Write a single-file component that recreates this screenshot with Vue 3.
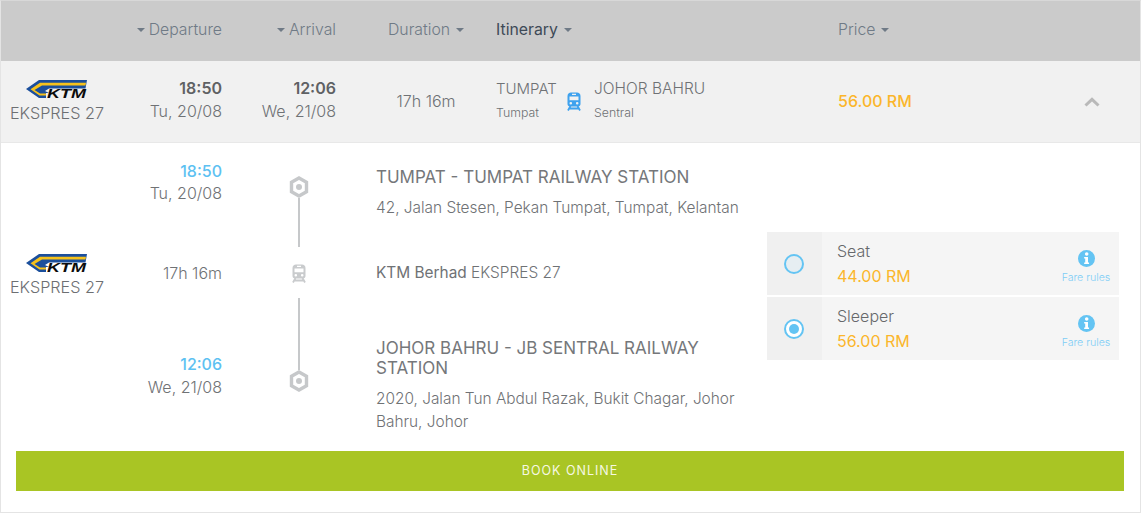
<script setup>
const head = [
  { label: 'Departure', cls: 'h-dep', before: true },
  { label: 'Arrival', cls: 'h-arr', before: true },
  { label: 'Duration', cls: 'h-dur' },
  { label: 'Itinerary', cls: 'h-iti' },
  { label: 'Price', cls: 'h-pri' }
]
const fares = [
  { name: 'Seat', price: '44.00 RM', on: false },
  { name: 'Sleeper', price: '56.00 RM', on: true }
]
const trainBody = 'M4 .5h6c2 0 3.500 1.500 3.500 3.500v8c0 1.500-1 2.500-2.500 2.500H3C1.500 14.500.5 13.500.5 12V4C.5 2 2 .5 4 .5zM5 1.800v1.200h4V1.800zM2.500 4.500v3.800h9V4.500zM3.800 10a1.300 1.300 0 100 2.600 1.300 1.300 0 000-2.600zM10.200 10a1.300 1.300 0 100 2.600 1.300 1.300 0 000-2.600z'
const trainLegs = 'M3.500 14 1 18.500M10.500 14l2.500 4.500M2.500 16.500h9'
const logoBlue = 'M13 0H61L59.500 8.500H23L19 11 23 13H20V18H13L0 9z'
const logoYellow = 'M14 2.700H60L59.500 5.600H16L8.500 10 14 13.500H20V15.500H13.500L4.500 9.200z'
</script>

<template>
  <div class="card">
    <div class="thead">
      <div v-for="h in head" :key="h.label" :class="['th', h.cls]">
        <i v-if="h.before" class="caret"></i>
        <span>{{ h.label }}</span>
        <i v-if="!h.before" class="caret"></i>
      </div>
    </div>

    <div class="summary">
      <div class="c-logo">
        <svg class="logo" viewBox="0 0 61 18">
          <path fill="#1b4f9c" :d="logoBlue"/>
          <path fill="#f6c21c" :d="logoYellow"/>
          <text x="21" y="18" class="logo-t" textLength="39" lengthAdjust="spacingAndGlyphs">KTM</text>
        </svg>
        <div class="name">EKSPRES 27</div>
      </div>
      <div class="c-time"><b>18:50</b><span>Tu, 20/08</span></div>
      <div class="c-time c-arr"><b>12:06</b><span>We, 21/08</span></div>
      <div class="c-dur">17h 16m</div>
      <div class="c-iti">
        <div class="st st-from"><div class="city">TUMPAT</div><div class="sub">Tumpat</div></div>
        <svg class="train blue" viewBox="0 0 14 19"><path fill-rule="evenodd" :d="trainBody"/><path :d="trainLegs" class="legs"/></svg>
        <div class="st"><div class="city">JOHOR BAHRU</div><div class="sub">Sentral</div></div>
      </div>
      <div class="c-price">56.00 RM</div>
      <svg class="chev" viewBox="0 0 16 10"><path d="M1.500 8.500 8 2.300l6.500 6.200" fill="none" stroke="#b9b9b9" stroke-width="3"/></svg>
    </div>

    <div class="detail">
      <div class="d-logo">
        <svg class="logo" viewBox="0 0 61 18">
          <path fill="#1b4f9c" :d="logoBlue"/>
          <path fill="#f6c21c" :d="logoYellow"/>
          <text x="21" y="18" class="logo-t" textLength="39" lengthAdjust="spacingAndGlyphs">KTM</text>
        </svg>
        <div class="name">EKSPRES 27</div>
      </div>

      <div class="d-times">
        <div class="t t1"><b>18:50</b><span>Tu, 20/08</span></div>
        <div class="t t2"><span>17h 16m</span></div>
        <div class="t t3"><b>12:06</b><span>We, 21/08</span></div>
      </div>

      <div class="d-line">
        <svg class="hex" viewBox="0 0 20 22"><path d="M10 2 17.500 6.300v9.400L10 20l-7.500-4.300V6.300z" fill="none" stroke="#c6c8ca" stroke-width="3.400"/><circle cx="10" cy="11" r="3" fill="#c6c8ca"/></svg>
        <i class="bar b1"></i>
        <svg class="train grey" viewBox="0 0 14 19"><path fill-rule="evenodd" :d="trainBody"/><path :d="trainLegs" class="legs"/></svg>
        <i class="bar b2"></i>
        <svg class="hex" viewBox="0 0 20 22"><path d="M10 2 17.500 6.300v9.400L10 20l-7.500-4.300V6.300z" fill="none" stroke="#c6c8ca" stroke-width="3.400"/><circle cx="10" cy="11" r="3" fill="#c6c8ca"/></svg>
      </div>

      <div class="d-info">
        <div class="i1">
          <h3>TUMPAT - TUMPAT RAILWAY STATION</h3>
          <p>42, Jalan Stesen, Pekan Tumpat, Tumpat, Kelantan</p>
        </div>
        <div class="i2"><strong>KTM Berhad</strong> EKSPRES 27</div>
        <div class="i3">
          <h3>JOHOR BAHRU - JB SENTRAL RAILWAY STATION</h3>
          <p>2020, Jalan Tun Abdul Razak, Bukit Chagar, Johor Bahru, Johor</p>
        </div>
      </div>

      <div class="fares">
        <div v-for="f in fares" :key="f.name" class="fare">
          <div class="radio-cell"><span :class="['radio', { on: f.on }]"></span></div>
          <div class="fare-main">
            <div class="fare-name">{{ f.name }}</div>
            <div class="fare-price">{{ f.price }}</div>
          </div>
          <div class="rules">
            <svg viewBox="0 0 16 16" class="info"><circle cx="8" cy="8" r="8" fill="#64c4f3"/><circle cx="8.200" cy="3.800" r="1.700" fill="#fff"/><path d="M5.800 6.500h3.600v5.200h1v1.500H5.800v-1.500h1V8H5.800z" fill="#fff"/></svg>
            <span>Fare rules</span>
          </div>
        </div>
      </div>
    </div>

    <div class="btn-wrap"><button class="book">BOOK ONLINE</button></div>
  </div>
</template>

<style>
html, body { margin: 0; background: #fff; }
</style>

<style scoped>
.card {
  box-sizing: border-box;
  width: 1141px;
  height: 513px;
  border: 1px solid #e4e4e4;
  border-top-color: #d8d8d8;
  font-family: Inter, "Liberation Sans", sans-serif;
  font-weight: 300;
  color: #6f7275;
  background: #fff;
  overflow: hidden;
}
.thead { box-sizing: border-box; height: 60px; padding-bottom: 4px; background: #cbcbcb; display: flex; align-items: center; font-size: 15.800px; color: #6f7a86; }
.th { display: flex; align-items: center; gap: 4px; white-space: nowrap; }
.h-dep { width: 221px; justify-content: flex-end; }
.h-arr { width: 114px; justify-content: flex-end; }
.h-dur { margin-left: 52px; width: 108px; gap: 6px; }
.h-iti { width: 342px; color: #3e4a57; gap: 6px; font-weight: 400; }
.h-pri { gap: 6px; }
.caret { width: 0; height: 0; border: 4px solid transparent; border-top-color: #6f7a86; border-bottom: 0; display: block; margin-top: 2px; }
.summary { height: 81px; background: #f1f1f1; border-bottom: 1px solid #e8e8e8; display: flex; align-items: center; }
.c-logo, .d-logo { width: 112px; display: flex; flex-direction: column; align-items: center; }
.logo { width: 61px; height: 18px; display: block; overflow: visible; margin-left: -1px; }
.logo-t { font: italic 700 12px "Liberation Sans", sans-serif; fill: #0c0c0c; }
.name { font-size: 16.200px; color: #6d6f72; margin-top: 5px; line-height: 20px; white-space: nowrap; }
.c-time { width: 109px; padding-bottom: 4px; text-align: right; display: flex; flex-direction: column; line-height: 23px; font-size: 16px; }
.c-arr { width: 114px; }
.c-time b { font-weight: 600; color: #5f6164; }
.c-dur { box-sizing: border-box; width: 160px; padding: 0 0 2px 20px; text-align: center; font-size: 16px; }
.c-iti { width: 342px; display: flex; align-items: center; }
.st { padding-bottom: 4px; }
.st .city { font-size: 15.500px; line-height: 22px; white-space: nowrap; }
.st .sub { font-size: 12.300px; line-height: 16px; margin-top: 5px; }
.st-from { width: 71px; }
.st-from .city { font-size: 15px; }
.train { width: 14px; height: 19px; display: block; flex: none; }
.c-iti .train { margin-right: 13px; }
.legs { fill: none; stroke-width: 1.800; }
.blue { fill: #3fa2ee; stroke: none; }
.blue .legs { stroke: #3fa2ee; }
.grey { fill: #c9cbcd; }
.grey .legs { stroke: #c9cbcd; }
.c-price { font-size: 16px; font-weight: 500; color: #fbb62b; width: 246px; padding-bottom: 2px; }
.chev { width: 16px; height: 10px; }
.detail { height: 308px; display: flex; }
.d-logo { margin-top: 111px; }
.d-times { width: 109px; text-align: right; font-size: 16px; display: flex; flex-direction: column; }
.t { display: flex; flex-direction: column; }
.t b { font-weight: 500; color: #5dc1f2; line-height: 22px; }
.t span { line-height: 22px; }
.t1 { margin-top: 17px; }
.t2 { margin-top: 58px; }
.t3 { margin-top: 69px; }
.t3 b { line-height: 23px; }
.d-line { width: 154px; display: flex; flex-direction: column; align-items: center; padding-top: 33px; box-sizing: border-box; }
.hex { width: 20px; height: 22px; display: block; flex: none; }
.bar { width: 2px; background: #c6c8ca; display: block; flex: none; }
.b1 { height: 49px; }
.b2 { height: 72px; }
.d-line .train { margin: 17px 0 15px; }
.d-info { width: 391px; font-size: 15.400px; display: flex; flex-direction: column; }
.d-info h3 { margin: 0; font-size: 17px; font-weight: 400; line-height: 20px; color: #75777a; }
.d-info p { margin: 9px 0 0; line-height: 23px; }
.i1 { margin-top: 24px; padding-right: 20px; }
.i2 { margin-top: 43px; line-height: 22px; }
.i2 strong { font-weight: 400; }
.i3 { margin-top: 54px; padding-right: 10px; }
.fares { width: 352px; margin-top: 89px; display: flex; flex-direction: column; gap: 2px; }
.fare { height: 63px; display: flex; background: #f5f5f5; }
.radio-cell { width: 55px; padding-right: 2px; box-sizing: border-box; background: #f0f0f0; display: flex; align-items: center; justify-content: center; }
.radio { box-sizing: border-box; width: 20px; height: 20px; border-radius: 50%; border: 2px solid #64c4f3; background: #e6eef2; display: block; position: relative; }
.radio.on { background: #fff; }
.radio.on::after { content: ""; position: absolute; left: 3px; top: 3px; width: 10px; height: 10px; border-radius: 50%; background: #64c4f3; }
.fare-main { flex: 1; padding: 8px 0 0 15px; font-size: 16px; line-height: 22px; }
.fare-name { color: #66686b; }
.fare-price { color: #fbb62b; font-size: 16px; font-weight: 400; margin-top: 3px; }
.rules { width: 50px; margin-right: 8px; display: flex; flex-direction: column; align-items: center; padding-top: 18px; box-sizing: border-box; color: #7dcdf5; font-size: 10.600px; white-space: nowrap; }
.info { width: 17px; height: 17px; display: block; margin-bottom: 4px; }
.btn-wrap { padding: 0 16px 0 15px; }
.book { width: 100%; height: 40px; padding: 0 0 2px; display: block; border: 0; background: #a9c524; color: #f6f8e2; font: 400 12.500px Inter, "Liberation Sans", sans-serif; letter-spacing: 1px; }
</style>
